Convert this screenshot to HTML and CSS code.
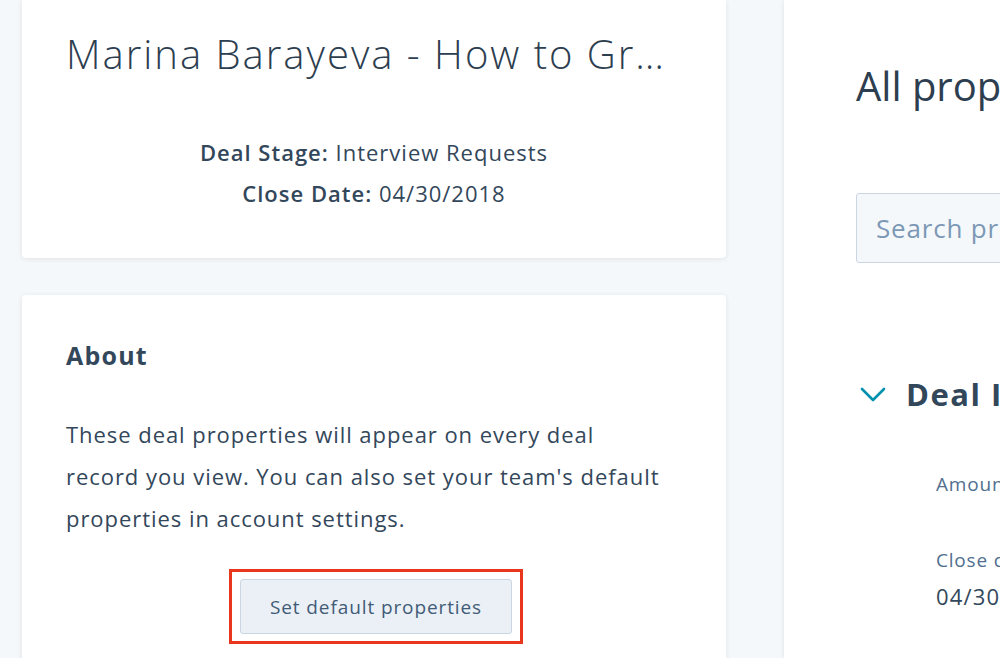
FILE: index.html
```html
<!DOCTYPE html>
<html>
<head>
<meta charset="utf-8">
<link rel="stylesheet" href="styles.css">
</head>
<body>
<div class="page">
  <div class="left">
    <section class="card summary">
      <h1 class="title">Marina Barayeva - How to Gr…</h1>
      <div class="meta">
        <p><b>Deal Stage:</b> Interview Requests</p>
        <p><b>Close Date:</b> 04/30/2018</p>
      </div>
    </section>
    <section class="card about">
      <h2 class="about-title">About</h2>
      <p class="about-text">These deal properties will appear on every deal record you view. You can also set your team's default properties in account settings.</p>
      <div class="btn-row">
        <div class="highlight">
          <button class="btn">Set default properties</button>
        </div>
      </div>
    </section>
  </div>
  <aside class="panel">
    <h1 class="panel-title">All properties</h1>
    <div class="search">Search properties</div>
    <div class="group">
      <div class="group-head">
        <svg class="chev" width="28" height="18" viewBox="0 0 28 18"><path d="M3 4 L14 15 L25 4" fill="none" stroke="#0091ae" stroke-width="2.6" stroke-linecap="round" stroke-linejoin="round"/></svg>
        <span class="group-title">Deal Information</span>
      </div>
      <div class="field">
        <div class="label">Amount</div>
      </div>
      <div class="field">
        <div class="label">Close date</div>
        <div class="value">04/30/2018</div>
      </div>
    </div>
  </aside>
</div>
</body>
</html>
```

FILE: styles.css
```css
html, body {
  margin: 0;
  padding: 0;
  height: 100%;
  overflow: hidden;
}
body {
  background: #f5f8fa;
  font-family: "Open Sans", Lato, sans-serif;
  color: #33475b;
}
.page {
  display: flex;
  align-items: flex-start;
  height: 658px;
}
.left {
  width: 704px;
  margin-left: 22px;
  flex: none;
  display: flex;
  flex-direction: column;
  gap: 37px;
}
.card {
  background: #fff;
  border-radius: 0 0 4px 4px;
  box-shadow: 0 1px 5px rgba(45, 62, 80, 0.10);
}
.summary {
  height: 258px;
  box-sizing: border-box;
  padding: 26px 44px 0;
  text-align: center;
}
.title {
  margin: 0;
  font-weight: 300;
  font-size: 40px;
  line-height: 56px;
  letter-spacing: 2px;
  text-align: left;
  white-space: nowrap;
  color: #2d3e50;
}
.meta {
  margin-top: 50px;
}
.meta p {
  margin: 0;
  font-size: 22px;
  line-height: 41px;
  letter-spacing: 1px;
  color: #33475b;
}
.meta b {
  font-weight: 600;
}
.about {
  border-radius: 4px;
  height: 400px;
  padding: 42px 44px 0;
  box-sizing: border-box;
}
.about-title {
  margin: 0;
  font-size: 25px;
  font-weight: 700;
  line-height: 36px;
  letter-spacing: 1.2px;
  color: #33475b;
}
.about-text {
  margin: 40px 0 0;
  font-size: 22px;
  line-height: 42px;
  letter-spacing: 0.95px;
  color: #33475b;
  width: 604px;
}
.btn-row {
  display: flex;
  justify-content: center;
  margin-top: 30px;
}
.highlight {
  border: 3px solid #e8371c;
  padding: 7px 8px;
  margin-left: 4px;
}
.btn {
  display: block;
  width: 272px;
  height: 55px;
  background: #eaf0f6;
  border: 1px solid #cbd6e2;
  border-radius: 3px;
  font-family: "Open Sans", Lato, sans-serif;
  font-size: 19px;
  letter-spacing: 0.9px;
  color: #425b76;
  padding: 0;
}
.panel {
  margin-left: 58px;
  flex: none;
  width: 500px;
  height: 658px;
  background: #fff;
  box-shadow: -1px 0 4px rgba(45, 62, 80, 0.08);
  padding: 58px 0 0 72px;
  box-sizing: border-box;
}
.panel-title {
  margin: 0;
  font-weight: 400;
  font-size: 40px;
  line-height: 56px;
  color: #2d3e50;
  white-space: nowrap;
}
.search {
  margin-top: 79px;
  height: 70px;
  width: 400px;
  box-sizing: border-box;
  background: #f5f8fa;
  border: 1px solid #cbd6e2;
  border-radius: 3px;
  padding-left: 19px;
  font-size: 26px;
  letter-spacing: 0.8px;
  line-height: 68px;
  color: #7c98b6;
  white-space: nowrap;
}
.group {
  margin-top: 111px;
}
.group-head {
  display: flex;
  align-items: center;
  gap: 19px;
  margin-left: 3px;
}
.chev {
  flex: none;
}
.group-title {
  font-size: 31px;
  font-weight: 700;
  line-height: 40px;
  letter-spacing: 1.5px;
  color: #33475b;
  white-space: nowrap;
}
.field {
  margin-left: 80px;
  margin-top: 56px;
}
.field + .field {
  margin-top: 48px;
}
.label {
  font-size: 19px;
  line-height: 28px;
  letter-spacing: 0.8px;
  color: #516f90;
  white-space: nowrap;
}
.value {
  font-size: 22px;
  line-height: 34px;
  letter-spacing: 1.2px;
  margin-top: 5px;
  color: #33475b;
  white-space: nowrap;
}
```
